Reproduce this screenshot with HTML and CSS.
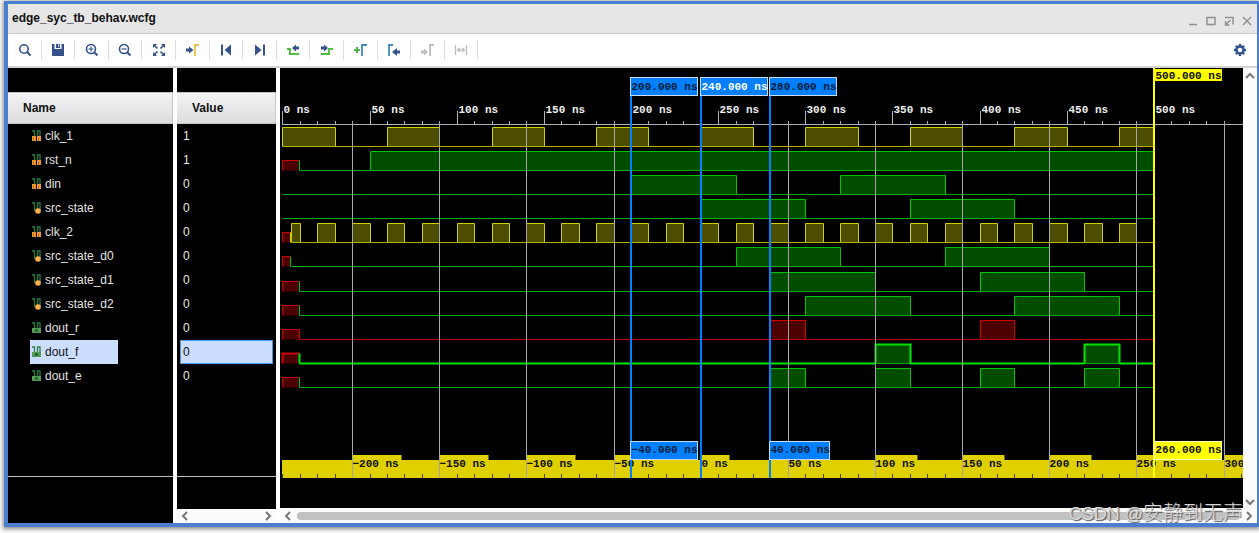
FILE: index.html
```html
<!DOCTYPE html>
<html lang="en">
<head>
<meta charset="utf-8">
<title>edge_syc_tb_behav.wcfg</title>
<link rel="stylesheet" href="styles.css">
</head>
<body>
<main class="window">
  <header class="titlebar">
    <h1 class="title">edge_syc_tb_behav.wcfg</h1>
    <div class="window-actions">
      <button class="win-btn" aria-label="Minimize"><svg viewBox="0 0 12 12"><path d="M2 9.500h8"/></svg></button>
      <button class="win-btn" aria-label="Maximize"><svg viewBox="0 0 12 12"><path d="M2 2.500h8v7h-8z"/></svg></button>
      <button class="win-btn" aria-label="Float"><svg viewBox="0 0 12 12"><path d="M2 2.500h8v7M7.500 5L3 9.500M2.500 6v4h4"/></svg></button>
      <button class="win-btn" aria-label="Close"><svg viewBox="0 0 12 12"><path d="M2 2l8 8M10 2l-8 8"/></svg></button>
    </div>
  </header>

  <nav class="toolbar" aria-label="Waveform tools">
    <button class="tool" aria-label="Find"><svg viewBox="0 0 16 16"><circle cx="7" cy="7" r="4.200"/><path d="M10 10l3.500 3.500" stroke-width="2"/></svg></button>
    <button class="tool" aria-label="Save"><svg viewBox="0 0 16 16"><path class="solid" d="M2 2h2.500v5h7V2H14v12H2zM6 2h4v4H6z"/><path d="M8.700 2.500v2" stroke="#fff" stroke-width="1"/></svg></button>
    <button class="tool" aria-label="Zoom in"><svg viewBox="0 0 16 16"><circle cx="7" cy="7" r="4.500"/><path d="M10.500 10.500l3 3" stroke-width="2"/><path d="M4.500 7h5M7 4.500v5" stroke-width="1.200"/></svg></button>
    <button class="tool" aria-label="Zoom out"><svg viewBox="0 0 16 16"><circle cx="7" cy="7" r="4.500"/><path d="M10.500 10.500l3 3" stroke-width="2"/><path d="M4.500 7h5" stroke-width="1.200"/></svg></button>
    <button class="tool" aria-label="Zoom fit"><svg viewBox="0 0 16 16"><path class="solid" d="M2 2h4L2 6zM14 2v4l-4-4zM2 14v-4l4 4zM14 14h-4l4-4z"/><path d="M3 3l3.500 3.500M13 3L9.500 6.500M3 13l3.500-3.500M13 13L9.500 9.500"/></svg></button>
    <button class="tool" aria-label="Go to cursor"><svg viewBox="0 0 16 16"><path class="solid" d="M1 6.500h3V4.500l4.500 3.500L4 11.500V9.500H1z"/><path d="M10 14V3h4" stroke="#e5c04a" stroke-width="1.800"/></svg></button>
    <button class="tool" aria-label="Go to start"><svg viewBox="0 0 16 16"><path class="solid" d="M3 2.500h2v11H3zM13 2.500v11L6.500 8z"/></svg></button>
    <button class="tool" aria-label="Go to end"><svg viewBox="0 0 16 16"><path class="solid" d="M11 2.500h2v11h-2zM3 2.500v11L9.500 8z"/></svg></button>
    <button class="tool" aria-label="Previous transition"><svg viewBox="0 0 16 16"><path d="M2 7h3v5h9" stroke="#4fc03f" stroke-width="2"/><path class="solid" d="M14 4.500h-3V2.500L7 6l4 3.500V7.500h3z"/></svg></button>
    <button class="tool" aria-label="Next transition"><svg viewBox="0 0 16 16"><path d="M2 12h8V7h4" stroke="#4fc03f" stroke-width="2"/><path class="solid" d="M2 4.500h3V2.500L9 6l-4 3.500V7.500H2z"/></svg></button>
    <button class="tool" aria-label="Add marker"><svg viewBox="0 0 16 16"><path d="M1 8h6M4 5v6" stroke="#4fb548" stroke-width="2"/><path d="M9 14V3h5" stroke="#4288c0" stroke-width="1.800"/></svg></button>
    <button class="tool" aria-label="Previous marker"><svg viewBox="0 0 16 16"><path d="M3 14V3h4" stroke="#4288c0" stroke-width="1.800"/><path class="solid" d="M14 8.500h-3V6l-5 4 5 4v-2.500h3z"/></svg></button>
    <button class="tool" aria-label="Next marker" disabled><svg viewBox="0 0 16 16"><path class="solid" d="M1 8.500h3V6.500l4 3.500-4 3.500V11.500H1z"/><path d="M10 14V3h4" stroke-width="1.800"/></svg></button>
    <button class="tool" aria-label="Swap cursors" disabled><svg viewBox="0 0 16 16"><path d="M2.500 3v10M13.500 3v10M5 8h6M6.500 6L4.500 8l2 2M9.500 6l2 2-2 2" stroke-width="1.300"/></svg></button>
    <button class="tool tool-settings" aria-label="Settings"><svg viewBox="0 0 16 16"><circle cx="8" cy="8" r="3.500" stroke-width="2.400"/><path d="M8 2v2M8 12v2M2 8h2M12 8h2M3.800 3.800l1.400 1.400M10.800 10.800l1.400 1.400M3.800 12.200l1.400-1.400M10.800 5.200l1.400-1.400" stroke-width="2.400"/></svg></button>
  </nav>

  <section class="panes">
    <div class="pane">
      <h2 class="column-head">Name</h2>
      <ul class="rows" id="names"></ul>
      <div class="pane-foot"></div>
    </div>
    <div class="pane">
      <h2 class="column-head">Value</h2>
      <ul class="rows" id="values"></ul>
      <div class="pane-foot"></div>
      <div class="hscroll hscroll-small">
        <button class="arrow" aria-label="Scroll values left"><svg viewBox="0 0 10 10"><path d="M7 1L3 5l4 4"/></svg></button>
        <button class="arrow" aria-label="Scroll values right"><svg viewBox="0 0 10 10"><path d="M3 1l4 4-4 4"/></svg></button>
      </div>
    </div>
    <div class="pane wave-pane">
      <svg class="wave" id="wave" role="img" aria-label="Waveforms"></svg>
    </div>
    <div class="vscroll">
      <button class="arrow" aria-label="Scroll up"><svg viewBox="0 0 10 10"><path d="M1 7l4-4 4 4"/></svg></button>
      <button class="arrow" aria-label="Scroll down"><svg viewBox="0 0 10 10"><path d="M1 3l4 4 4-4"/></svg></button>
    </div>
    <div class="hscroll hscroll-wave">
      <button class="arrow" aria-label="Scroll left"><svg viewBox="0 0 10 10"><path d="M7 1L3 5l4 4"/></svg></button>
      <div class="thumb"></div>
      <button class="arrow" aria-label="Scroll right"><svg viewBox="0 0 10 10"><path d="M3 1l4 4-4 4"/></svg></button>
    </div>
  </section>
</main>
<div class="watermark"><span class="watermark-site">CSDN @</span>安静到无声</div>
<script src="wave.js"></script>
</body>
</html>
```
FILE: styles.css
```css
* { box-sizing: border-box; }

body {
  margin: 0;
  padding: 1px 0 6px 4px;
  height: 100vh;
  overflow: hidden;
  background: #fafafa;
  font-family: "Liberation Sans", Arial, sans-serif;
  font-size: 12px;
  color: #111;
}

h1, h2, ul { margin: 0; padding: 0; font-size: 12px; list-style: none; }

button { padding: 0; border: 0; background: none; }

.window {
  display: flex;
  flex-direction: column;
  height: 100%;
  border: solid #4a7fd0;
  border-width: 3px 2px 4px 4px;
  box-shadow: 0 1px 4px 1px #888;
  background: #fff;
}

.titlebar {
  display: flex;
  align-items: center;
  justify-content: space-between;
  height: 30px;
  padding: 0 4px;
  background: #e6e6e6;
  border-bottom: 1px solid #ccc;
}

.title { line-height: 26px; padding-bottom: 2px; }

.window-actions { display: flex; gap: 6px; padding-top: 4px; }

.win-btn { width: 12px; height: 12px; }
.win-btn svg { display: block; width: 12px; height: 12px; fill: none; stroke: #8e8e8e; stroke-width: 1.4; }

.toolbar {
  display: flex;
  align-items: center;
  height: 34px;
  border-bottom: 2px solid #d4d4d4;
  background: #fff;
}

.tool {
  display: flex;
  align-items: center;
  justify-content: center;
  width: 34px;
  height: 20px;
  border-right: 1px solid #dedede;
  color: #35528c;
}
.tool:nth-child(5n + 2), .tool:nth-child(5n + 4) { width: 33px; }
.tool svg { width: 16px; height: 16px; fill: none; stroke: currentColor; stroke-width: 1.6; }
.tool .solid { fill: currentColor; stroke: none; fill-rule: evenodd; }
.tool:disabled { color: #bdbdbd; }
.tool-settings { margin-left: auto; border: 0; }

.panes {
  flex: 1;
  display: grid;
  grid-template-columns: 165px 103px minmax(0, 1fr) 14px;
  grid-template-rows: minmax(0, 1fr) 15px;
  min-height: 0;
}

.pane {
  grid-row: 1 / 3;
  display: flex;
  flex-direction: column;
  padding-top: 24px;
  background: #000;
}
.pane + .pane { margin-left: 4px; }
.wave-pane { grid-row: 1; padding-top: 0; overflow: hidden; }

.column-head {
  height: 32px;
  padding-left: 15px;
  line-height: 31px;
  border: 1px solid #c4c4c8;
  border-left: 0;
  background: linear-gradient(#f3f3f4, #dddde0);
}

.rows { height: 352px; }

.signal {
  display: flex;
  align-items: center;
  gap: 4px;
  width: 88px;
  height: 24px;
  margin-left: 22px;
  padding-left: 2px;
  color: #e2e2e2;
  white-space: nowrap;
}
.signal svg { width: 9px; height: 12px; }

.value {
  height: 24px;
  margin: 0 3px;
  padding-left: 3px;
  line-height: 24px;
  color: #e2e2e2;
}

.selected { background: #ccdeff; color: #111; }
.value.selected { line-height: 22px; padding-left: 2px; border: 1px solid #4d96d8; }

.pane-foot { flex: 1; border-top: 1px solid #c0c0c0; }

.wave { display: block; width: 100%; height: 440px; }
.wave text { font: bold 11px "Liberation Mono", monospace; white-space: pre; }

.hscroll {
  display: flex;
  align-items: center;
  justify-content: space-between;
  gap: 4px;
  height: 15px;
  padding: 0 3px;
  background: #fbfbfb;
}
.hscroll-small { height: 14px; }
.hscroll-wave { grid-column: 3 / 5; grid-row: 2; margin-left: 4px; }

.thumb { flex: 1; height: 8px; border-radius: 4px; background: #c1c1c1; }

.vscroll {
  grid-column: 4;
  grid-row: 1;
  display: flex;
  flex-direction: column;
  align-items: center;
  justify-content: space-between;
  padding: 3px 0 1px;
  background: #fbfbfb;
}

.arrow { width: 10px; height: 10px; }
.arrow svg { display: block; width: 10px; height: 10px; fill: none; stroke: #777; stroke-width: 2; }

.watermark {
  position: absolute;
  right: 16px;
  bottom: 4px;
  font: 300 20px/29px "Noto Sans CJK SC", sans-serif;
  color: #d8d8d8;
  text-shadow: 1px 1px 1px #555;
}
.watermark-site { font-family: "Liberation Sans", sans-serif; font-size: 18px; }
```
FILE: wave.js
```js
const SVG = "http://www.w3.org/2000/svg";
const END = 500;

const signals = [
  { name: "clk_1", value: 1, icon: "in", color: "yellow", high: pulses(0, 60, 30) },
  { name: "rst_n", value: 1, icon: "in", color: "green", unknown: 10, high: [[50, END]] },
  { name: "din", value: 0, icon: "in", color: "green", high: [[200, 260], [320, 380]] },
  { name: "src_state", value: 0, icon: "reg", color: "green", high: [[240, 300], [360, 420]] },
  { name: "clk_2", value: 0, icon: "in", color: "yellow", unknown: 5, high: [[5, 10], ...pulses(20, 20, 10)] },
  { name: "src_state_d0", value: 0, icon: "reg", color: "green", unknown: 5, high: [[260, 320], [380, 440]] },
  { name: "src_state_d1", value: 0, icon: "reg", color: "green", unknown: 10, high: [[280, 340], [400, 460]] },
  { name: "src_state_d2", value: 0, icon: "reg", color: "green", unknown: 10, high: [[300, 360], [420, 480]] },
  { name: "dout_r", value: 0, icon: "out", color: "red", unknown: 10, high: [[280, 300], [400, 420]] },
  { name: "dout_f", value: 0, icon: "out", color: "green", unknown: 10, high: [[340, 360], [460, 480]], selected: true },
  { name: "dout_e", value: 0, icon: "out", color: "green", unknown: 10, high: [[280, 300], [340, 360], [400, 420], [460, 480]] }
];

const palette = {
  yellow: { line: "#d0d000", low: "#b4b400", fill: "#4d4d00" },
  green: { line: "#00c400", low: "#00ac00", fill: "#004d00" },
  red: { line: "#d00000", low: "#bc0000", fill: "#4d0000" }
};

function pulses(start, period, width) {
  const list = [];
  for (let t = start; t < END; t += period) list.push([t, Math.min(t + width, END)]);
  return list;
}

function icon(kind) {
  const base = {
    in: '<path fill="#f0952b" d="M0 6h4v5H0zM5 6h4v5H5z"/><path fill="#b06414" d="M1 8h1v2H1zM6 8h1v2H6z"/>',
    reg: '<circle cx="6" cy="9" r="2.800" fill="#ffb04d"/>',
    out: '<path fill="#4f9a55" d="M0 6h9v5H0z"/><path fill="#2c6a35" d="M3 7h3v3H3z"/>'
  }[kind];
  return `<svg viewBox="0 0 9 12" aria-hidden="true"><path d="M0 1h2.500V9M5.500 9V1H8V9" fill="none" stroke="#2f7d42" stroke-width="1.300"/>${base}</svg>`;
}

for (const s of signals) {
  const mark = s.selected ? " selected" : "";
  document.getElementById("names").insertAdjacentHTML("beforeend", `<li class="signal${mark}">${icon(s.icon)}<span>${s.name}</span></li>`);
  document.getElementById("values").insertAdjacentHTML("beforeend", `<li class="value${mark}">${s.value}</li>`);
}

const wave = document.getElementById("wave");

function add(tag, attrs, text) {
  const node = document.createElementNS(SVG, tag);
  for (const key in attrs) node.setAttribute(key, attrs[key]);
  if (text !== undefined) node.textContent = text;
  wave.appendChild(node);
}

const x = t => Math.floor(2.9 + t * 1.743) + 0.5;
const path = (d, stroke, width = 1) => add("path", { d, stroke, "stroke-width": width, fill: "none" });
const rect = (left, top, width, height, fill, stroke = "none") => add("rect", { x: left, y: top, width, height, fill, stroke });
const label = (left, base, text, fill) => add("text", { x: left, y: base, fill }, text);

// Time axis
rect(2, 56, "100%", 1, "#b0b0b0");
for (let t = 0; t <= 540; t += 10) {
  path(`M${x(t)} ${t % 50 || t > END ? 53 : 43}V57`, "#b0b0b0");
  if (t % 50 === 0 && t <= END) label(x(t) + 1, 45, `${t} ns`, "#eee");
}

// Signal traces
signals.forEach((s, i) => {
  const shift = i * 24 + (i > 5 ? 1 : 0);
  const top = 59.5 + shift;
  const low = 78.5 + shift;
  const mid = low - 10;
  const c = palette[s.color];
  const width = s.selected ? 2 : 1;
  const line = s.selected ? "#00e400" : c.line;
  let from = 0;
  if (s.unknown) {
    from = s.unknown;
    rect(x(0), mid, x(from) - x(0) - 1, 10, palette.red.fill);
    path(`M${x(0)} ${low}V${mid}H${x(from) - 1}`, "#c80000", width);
    path(`M${x(from) - 1} ${mid}V${low}`, line, width);
  }
  for (const [a, b] of s.high) rect(x(a), top, x(b) - x(a), low - top, c.fill);
  let cursor = from;
  for (const [a, b] of s.high) {
    if (a > cursor) path(`M${x(cursor) - (cursor ? 1 : 0)} ${low}H${x(a)}`, s.selected ? line : c.low, width);
    path(`M${x(a)} ${low}H${x(b)}`, c.low, 1);
    path(`M${x(a)} ${low}V${top}H${x(b)}V${low}`, line, width);
    cursor = b;
  }
  if (cursor < END) path(`M${x(cursor)} ${low}H${x(END)}`, s.selected ? line : c.low, width);
});

// Ruler measured from the main cursor at 240 ns
rect(2, 392, "100%", 18, "#e0d000");
for (let t = 0; t <= 550; t += 10) path(`M${x(t)} 406V410`, "#4a4500");
for (let t = 40; t <= 540; t += 50) {
  const unit = t < 540 ? " ns" : "";
  const text = `${t - 240}${unit}`.replace("-", "−");
  rect(x(t), 387, text.length * 7, 6, "#e0d000");
  path(`M${x(t)} 53V410`, "#a8a8a8");
  label(x(t), 399, text, "#111");
}

// Markers and cursor
const markers = [
  { t: 200, width: 67, text: "200.000 ns", delta: "−40.000 ns", deltaWidth: 67, ink: "#001a33" },
  { t: 240, width: 67, text: "240.000 ns", ink: "#fff" },
  { t: 280, width: 67, text: "280.000 ns", delta: "40.000 ns", deltaWidth: 60, ink: "#001a33" }
];
for (const m of markers) {
  path(`M${x(m.t) - 0.5} 10V410`, "#0080ff", 2);
  rect(x(m.t) - 1, 9.5, m.width, 18, "#0080ff", "#c4dcf4");
  label(x(m.t), 22, m.text, m.ink);
  if (m.delta) {
    rect(x(m.t) - 1, 373.5, m.deltaWidth, 18, "#0080ff", "#c4dcf4");
    label(x(m.t), 385, m.delta, "#001a33");
  }
}
path(`M${x(END) - 0.5} 0V410`, "#ffff00", 2);
rect(x(END) - 0.5, 1, 68, 12, "#ffff00");
label(x(END) + 1, 11, "500.000 ns", "#111");
rect(x(END), 373.5, 67, 18, "#ffff00", "#ffffc0");
label(x(END) + 1, 385, "260.000 ns", "#111");
```
